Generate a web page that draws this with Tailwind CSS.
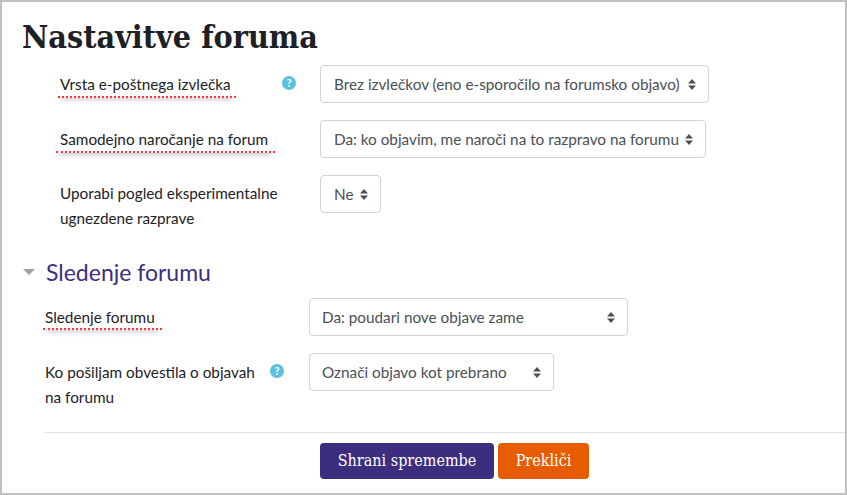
<!DOCTYPE html>
<html lang="sl">
<head>
    <meta charset="UTF-8">
    <title>Nastavitve foruma</title>
    <script src="https://cdn.jsdelivr.net/npm/@tailwindcss/browser@4"></script>
</head>
<body class="h-[495px] w-[847px] overflow-hidden bg-white">
    <div class="h-[495px] border-2 border-[#c0c0c0] text-[15.3px] leading-[24px] text-[#1d2125] font-['Lato','Liberation_Sans',sans-serif]">

        <!-- Naslov -->
        <h1 class="pl-[20px] pt-[15px] h-[63px] text-[32px] leading-[40px] font-bold text-[#1d2125] font-['DejaVu_Serif_Condensed','DejaVu_Serif',serif]">Nastavitve foruma</h1>

        <!-- Prvi del -->
        <div class="pl-[58px]">
            <div class="flex items-start">
                <div class="w-[260px] flex pt-[7px]">
                    <div class="w-[222px]"><span class="inline-block -ml-[2px] px-[2px] w-[178px] h-[26px] border-b-2 border-dotted border-[#f33] shadow-[0_5px_5px_-3px_rgba(0,0,0,0.2)]">Vrsta e-poštnega izvlečka</span></div>
                    <div class="w-[14px] h-[14px] mt-[4px] rounded-full bg-[#5bc0de] text-white text-[11px] leading-[14px] font-bold text-center">?</div>
                </div>
                <div class="w-[389px] h-[38px] px-[13px] flex items-center justify-between border border-[#ced4da] rounded text-[#495057]">
                    <span>Brez izvlečkov (eno e-sporočilo na forumsko objavo)</span>
                    <svg width="8" height="11" viewBox="0 0 8 11" class="-mr-[1px]"><path d="M0 4.5 L4 0 L8 4.5 Z M0 6.5 L8 6.5 L4 11 Z" fill="#495057"/></svg>
                </div>
            </div>
            <div class="flex items-start mt-[17px]">
                <div class="w-[260px] pt-[7px]">
                    <span class="inline-block -ml-[4px] px-[4px] w-[219px] h-[26px] border-b-2 border-dotted border-[#f33] shadow-[0_5px_5px_-3px_rgba(0,0,0,0.2)]">Samodejno naročanje na forum</span>
                </div>
                <div class="w-[386px] h-[38px] px-[13px] flex items-center justify-between border border-[#ced4da] rounded text-[#495057]">
                    <span>Da: ko objavim, me naroči na to razpravo na forumu</span>
                    <svg width="8" height="11" viewBox="0 0 8 11" class="-mr-[1px]"><path d="M0 4.5 L4 0 L8 4.5 Z M0 6.5 L8 6.5 L4 11 Z" fill="#495057"/></svg>
                </div>
            </div>
            <div class="flex items-start mt-[17px]">
                <div class="w-[260px] pt-[6px] leading-[25px]">Uporabi pogled eksperimentalne<br>ugnezdene razprave</div>
                <div class="w-[61px] h-[38px] px-[13px] flex items-center justify-between border border-[#ced4da] rounded text-[#495057]">
                    <span>Ne</span>
                    <svg width="8" height="11" viewBox="0 0 8 11" class="-mr-[1px]"><path d="M0 4.5 L4 0 L8 4.5 Z M0 6.5 L8 6.5 L4 11 Z" fill="#495057"/></svg>
                </div>
            </div>
        </div>

        <!-- Sledenje forumu -->
        <div class="flex items-center mt-[25px] h-[32px] pl-[21px]">
            <svg width="12" height="6" viewBox="0 0 12 6"><path d="M0 0 H12 L6 6 Z" fill="#a0a0a0"/></svg>
            <h3 class="ml-[11px] text-[23px] text-[#3e2f7f]">Sledenje forumu</h3>
        </div>

        <div class="pl-[43px] mt-[10px]">
            <div class="flex items-start">
                <div class="w-[264px] pt-[7px]">
                    <span class="inline-block -ml-[2px] px-[2px] w-[119px] h-[25px] border-b-2 border-dotted border-[#f33] shadow-[0_5px_5px_-3px_rgba(0,0,0,0.2)]">Sledenje forumu</span>
                </div>
                <div class="w-[319px] h-[38px] pl-[12px] pr-[13px] flex items-center justify-between border border-[#ced4da] rounded text-[#495057]">
                    <span>Da: poudari nove objave zame</span>
                    <svg width="8" height="11" viewBox="0 0 8 11" class="-mr-[1px]"><path d="M0 4.5 L4 0 L8 4.5 Z M0 6.5 L8 6.5 L4 11 Z" fill="#495057"/></svg>
                </div>
            </div>
            <div class="flex items-start mt-[17px]">
                <div class="w-[264px] flex pt-[7px]">
                    <div class="w-[225px] leading-[25px]">Ko pošiljam obvestila o objavah<br>na forumu</div>
                    <div class="w-[14px] h-[14px] mt-[4px] rounded-full bg-[#5bc0de] text-white text-[11px] leading-[14px] font-bold text-center">?</div>
                </div>
                <div class="w-[245px] h-[38px] pl-[12px] pr-[13px] flex items-center justify-between border border-[#ced4da] rounded text-[#495057]">
                    <span>Označi objavo kot prebrano</span>
                    <svg width="8" height="11" viewBox="0 0 8 11" class="-mr-[1px]"><path d="M0 4.5 L4 0 L8 4.5 Z M0 6.5 L8 6.5 L4 11 Z" fill="#495057"/></svg>
                </div>
            </div>
        </div>

        <!-- Gumbi -->
        <div class="ml-[43px] mt-[22px] border-t border-[#dee2e6] pl-[275px] pt-[10px] flex gap-[4px] text-[16px] text-white font-['DejaVu_Serif_Condensed','DejaVu_Serif',serif]">
            <button class="w-[174px] h-[36px] rounded bg-[#3c2d7e]">Shrani spremembe</button>
            <button class="w-[91px] h-[36px] rounded bg-[#e75c00]">Prekliči</button>
        </div>
    </div>
</body>
</html>
